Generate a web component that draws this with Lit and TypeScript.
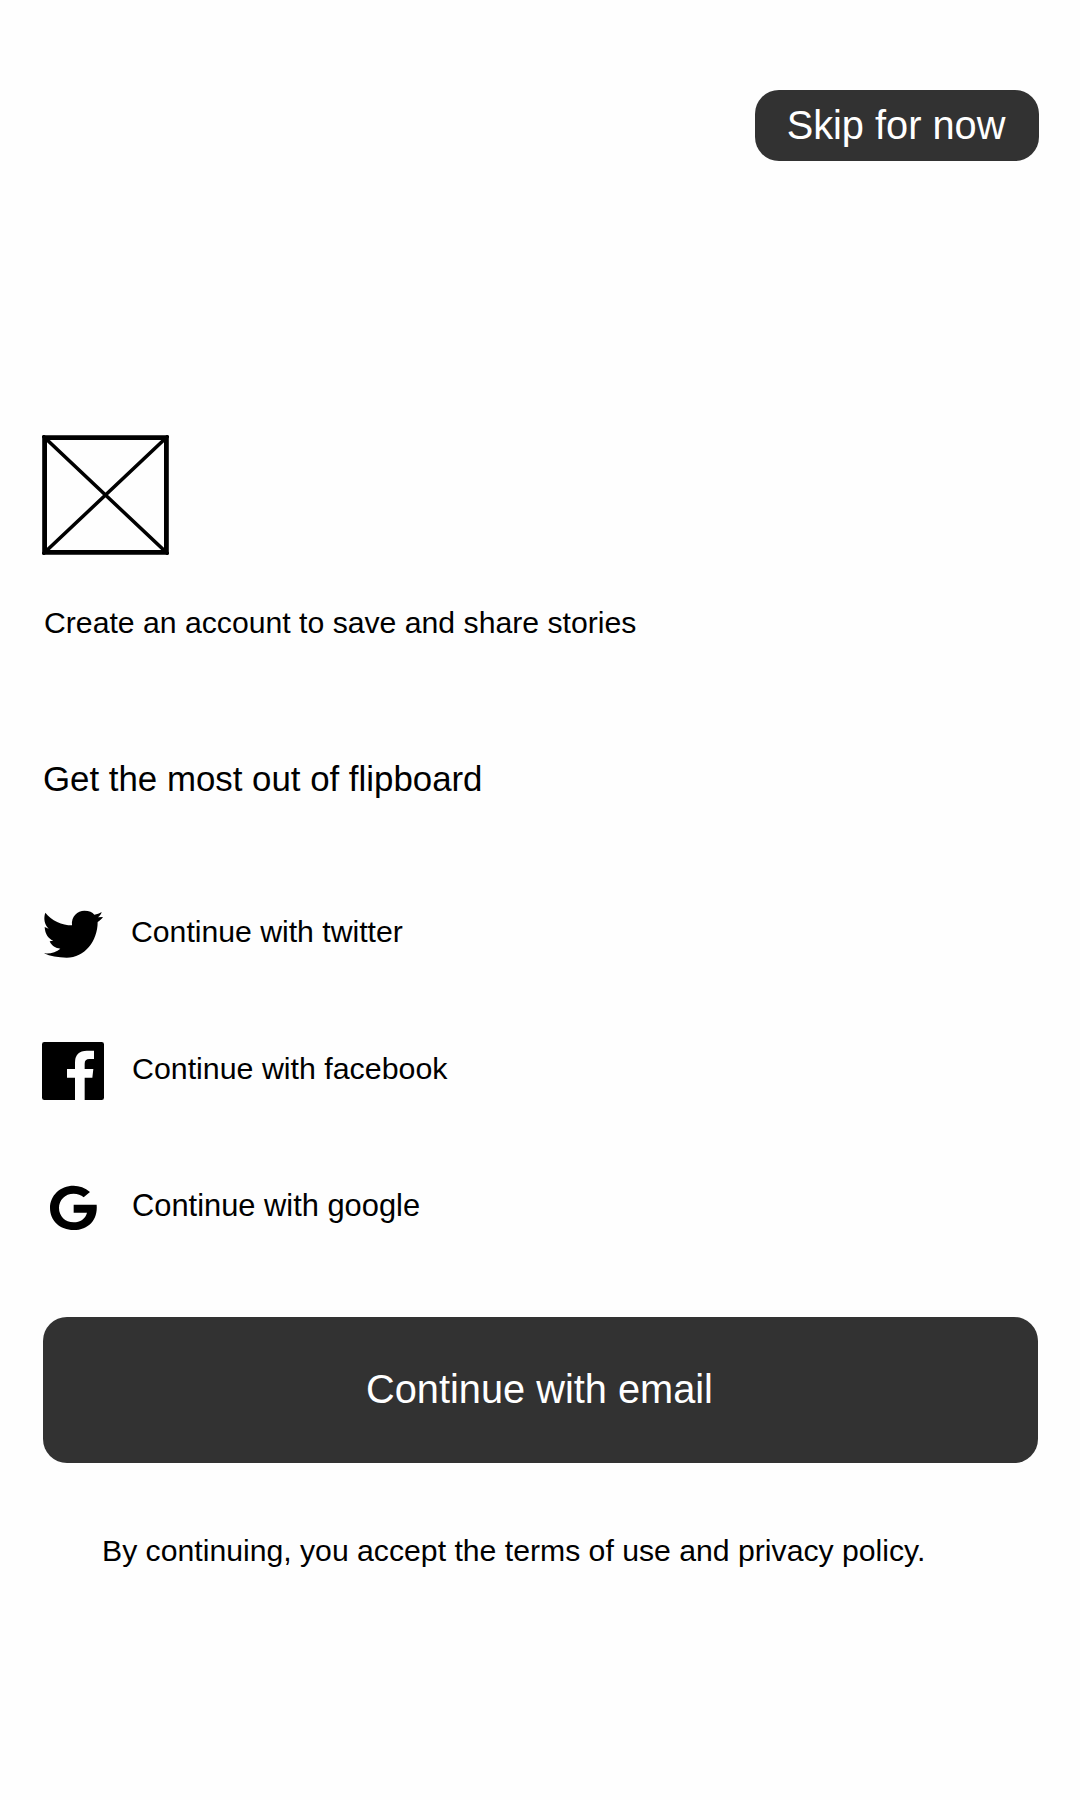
import { LitElement, html, svg, css } from "lit";
import { customElement } from "lit/decorators.js";

// Icons are drawn on a 270x240 grid, shown at a third of that size.
const twitter = svg`<path d="M46 53C64 76 96 91 126 91C123 64 143 47 163 47C178 47 187 51 193 59C201 58 208 55 215 51C213 58 209 63 204 67L219 66C215 72 209 77 203 81C203 138 164 188 110 188C84 188 60 184 42 175C61 177 79 172 91 161C77 160 65 153 59 139L70 137C56 132 45 118 44 96L56 101C43 88 40 69 46 53Z"/>`;
const facebook = svg`<path d="M43 36H215Q222 36 222 43V203Q222 210 215 210H164V143H187L190 117H164V101Q164 87 178 87H192V62H171Q135 62 135 98V117H111V143H135V210H43Q36 210 36 203V43Q36 36 43 36Z"/>`;
const google = svg`<path d="M180 66C165 53 148 47 131 47C90 47 60 77 60 114C60 152 90 180 131 180C175 180 204 150 200 104H131V128H171C166 147 150 157 131 157C105 157 87 138 87 114C87 90 105 71 131 71C143 71 153 75 161 82Z"/>`;

const providers = [
  { name: "twitter", icon: twitter },
  { name: "facebook", icon: facebook },
  { name: "google", icon: google },
];

@customElement("app-root")
export class AppRoot extends LitElement {
  static styles = css`
    :host {
      display: block;
      height: 1800px;
      background: #fefefe;
      color: #000;
      font: 30.2px/36px "Liberation Sans", Arial, sans-serif;
    }
    * { box-sizing: border-box; }
    .page {
      display: flex;
      flex-direction: column;
      height: 1800px;
      padding: 90px 41px 0 42px;
      white-space: nowrap;
    }
    p, h1 { margin: 0; font-weight: 400; }
    svg { display: block; flex: none; }
    button {
      border: 0;
      padding: 0 2px 2px 0;
      background: #323232;
      color: #fff;
      border-radius: 24px;
      font: 39.75px/46px "Liberation Sans", Arial, sans-serif;
    }
    .skip {
      align-self: flex-end;
      width: 284px;
      height: 71px;
    }
    .placeholder { margin-top: 274px; }
    .lead { margin: 50px 0 0 2px; }
    h1 { margin: 117px 0 0 1px; font-size: 34.85px; line-height: 42px; }
    .providers { display: flex; flex-direction: column; margin: 95px 0 0 -12px; }
    .provider { display: flex; gap: 10px; height: 137px; }
    .icon-facebook { margin-top: -2px; }
    .icon-google { margin-top: 1px; }
    .label { padding: 19px 0 0 2px; }
    .twitter { padding-left: 1px; }
    .facebook { font-size: 30.35px; }
    .google { font-size: 30.85px; }
    .email { width: 995px; height: 146px; margin: 11px 0 0 1px; }
    .terms { margin: 70px 0 0 60px; }
  `;

  render() {
    return html`<main class="page">
      <button class="skip">Skip for now</button>
      <svg class="placeholder" width="127" height="120" viewBox="0 0 127 120" fill="none" stroke="#000">
        <rect x="2.6" y="2.6" width="121.8" height="114.8" stroke-width="4.8" stroke-linejoin="round" />
        <path d="M0.5 0.5L126.5 119.5M126.5 0.5L0.5 119.5" stroke-width="3.5" />
      </svg>
      <p class="lead">Create an account to save and share stories</p>
      <h1>Get the most out of flipboard</h1>
      <div class="providers">
        ${providers.map(
          (p) => html`<div class="provider">
            <svg class="icon-${p.name}" width="90" height="80" viewBox="0 0 270 240">${p.icon}</svg>
            <span class="label ${p.name}">Continue with ${p.name}</span>
          </div>`
        )}
      </div>
      <button class="email">Continue with email</button>
      <p class="terms">By continuing, you accept the terms of use and privacy policy.</p>
    </main>`;
  }
}
